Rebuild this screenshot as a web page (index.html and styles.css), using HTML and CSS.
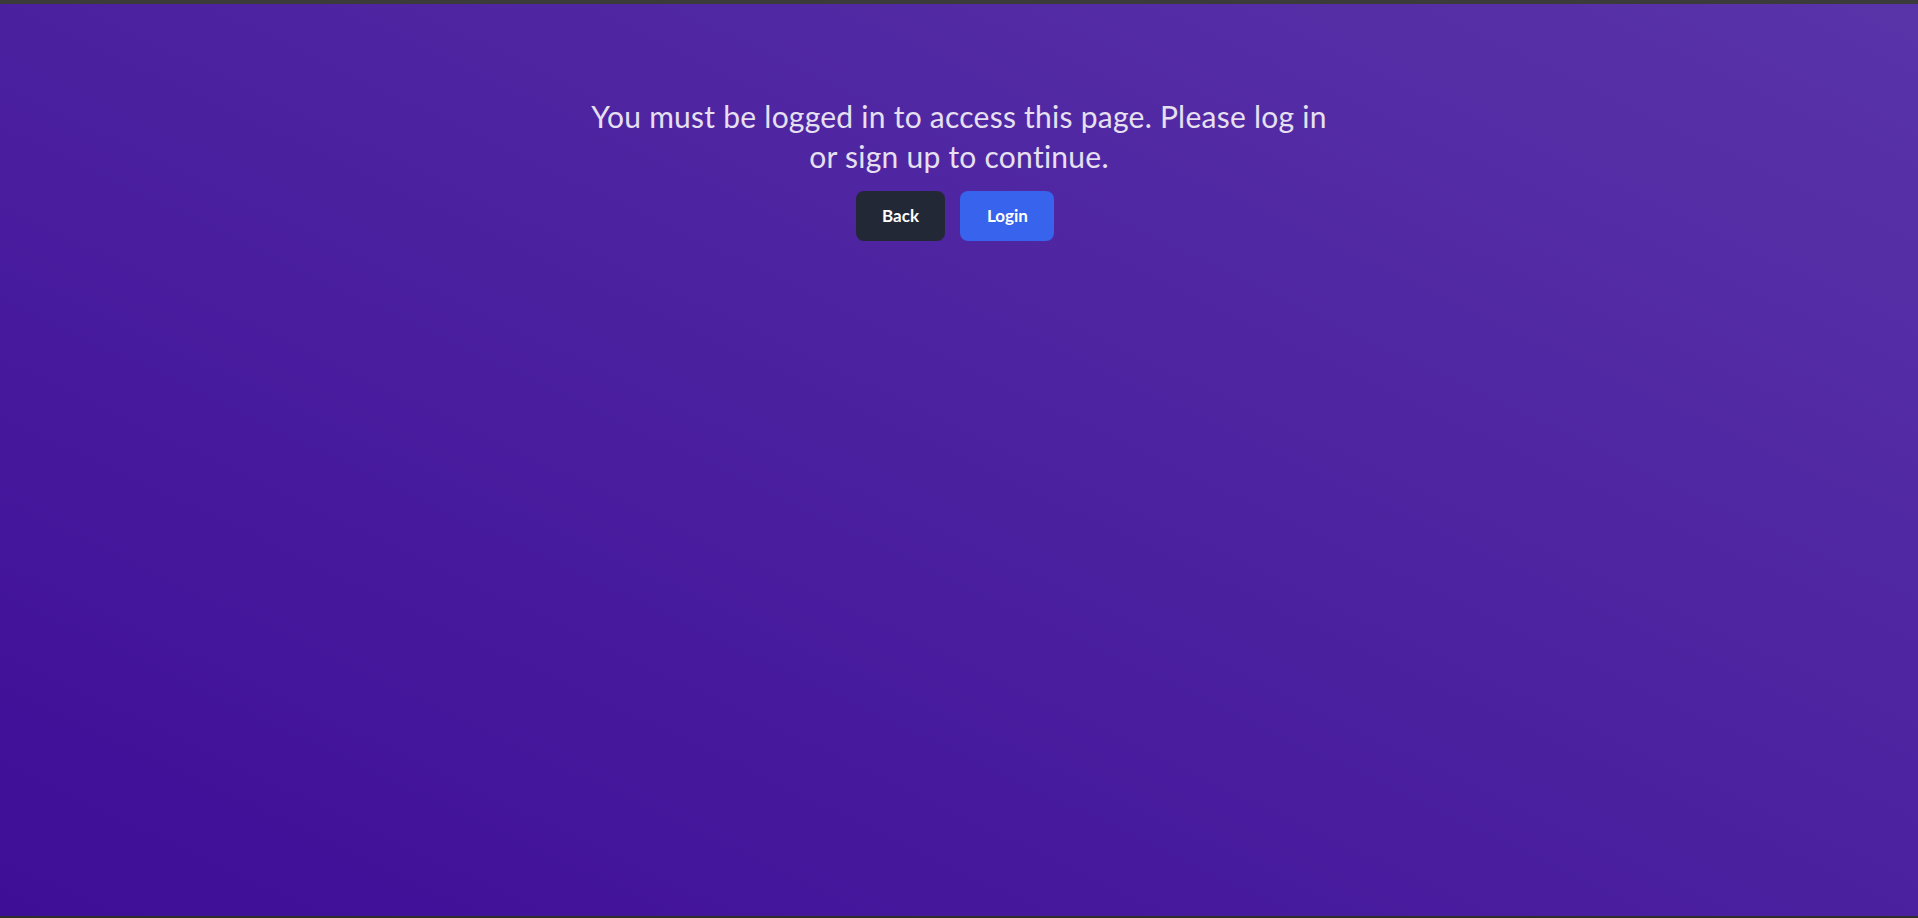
FILE: index.html
```html
<!DOCTYPE html>
<html lang="en">
<head>
<meta charset="utf-8">
<title>Access required</title>
<link rel="stylesheet" href="styles.css">
</head>
<body>
<div class="topbar"></div>
<main class="page">
  <div class="notice">
    <p class="message">You must be logged in to access this page. Please log in or sign up to continue.</p>
    <div class="actions">
      <button class="btn btn-back">Back</button>
      <button class="btn btn-login">Login</button>
    </div>
  </div>
</main>
<div class="bottombar"></div>
</body>
</html>
```
FILE: styles.css
```css
* { box-sizing: border-box; }
html, body { margin: 0; padding: 0; height: 100%; }
body {
  display: flex;
  flex-direction: column;
  font-family: Lato, "Open Sans", "Liberation Sans", sans-serif;
  background: #333;
}
.topbar { height: 4px; background: #3b3b3b; flex: none; }
.bottombar { height: 2px; background: #2e2e2c; flex: none; }
.page {
  flex: 1;
  background: linear-gradient(to top right, #3e0e97, #5933a8);
  display: flex;
  justify-content: center;
}
.notice {
  margin-top: 92px;
  max-width: 768px;
  display: flex;
  flex-direction: column;
  align-items: center;
}
.message {
  margin: 0;
  font-size: 30px;
  line-height: 40px;
  letter-spacing: 0.25px;
  text-align: center;
  color: #e6e0f1;
}
.actions {
  margin-top: 15px;
  margin-right: 8px;
  display: flex;
  gap: 15px;
}
.btn {
  font-family: inherit;
  font-size: 17px;
  font-weight: 700;
  line-height: 24px;
  padding: 13px 26.5px;
  border: none;
  border-radius: 8px;
  color: #ffffff;
  cursor: pointer;
}
.btn-back { background: #222836; }
.btn-login { background: #3863ec; }
```
